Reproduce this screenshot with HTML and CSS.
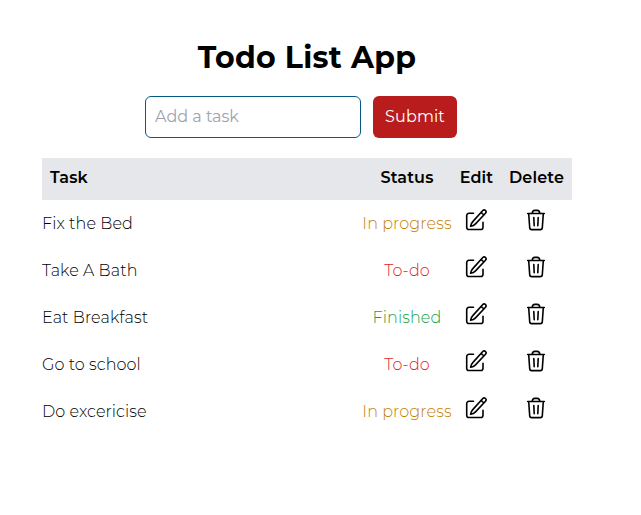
FILE: index.html
```html
<!DOCTYPE html>
<html lang="en">
<head>
<meta charset="utf-8">
<title>Todo List App</title>
<link rel="stylesheet" href="styles.css">
</head>
<body>
<svg class="sprite" aria-hidden="true">
  <symbol id="edit" viewBox="0 0 24 24"><path d="M9.500 5.300H5A2.300 2.300 0 0 0 2.700 7.600v11.600A2.300 2.300 0 0 0 5 21.500h11.700a2.300 2.300 0 0 0 2.300-2.300v-5M18.800 2.500a1.900 1.900 0 0 1 2.700 2.700L11.500 15.900c-1.200 1.300-2.800 2.100-4.900 2.400.3-2.100 1.100-3.700 2.400-4.900zM17.300 4a3.600 3.600 0 0 0 2.700 2.700"/></symbol>
  <symbol id="trash" viewBox="0 0 24 24"><path d="M3.700 5.500h16.600M8.200 5.300c.2-1.800 1-2.900 2.500-2.900h2.600c1.500 0 2.300 1.100 2.500 2.900M4.700 5.700l1 14A2 2 0 0 0 7.700 21.600h8.600a2 2 0 0 0 2-1.900l1-14M9.800 9.500l.4 8.200M14.200 9.500l-.4 8.200"/></symbol>
</svg>
<main class="app">
  <h1>Todo List App</h1>
  <form class="form">
    <input class="field" type="text" placeholder="Add a task">
    <button class="submit" type="button">Submit</button>
  </form>
  <table>
    <thead><tr><th class="task">Task</th><th class="state">Status</th><th class="edit">Edit</th><th class="delete">Delete</th></tr></thead>
    <tbody>
      <tr><td>Fix the Bed</td><td class="progress">In progress</td><td><svg><use href="#edit"/></svg></td><td><svg><use href="#trash"/></svg></td></tr>
      <tr><td>Take A Bath</td><td class="todo">To-do</td><td><svg><use href="#edit"/></svg></td><td><svg><use href="#trash"/></svg></td></tr>
      <tr><td>Eat Breakfast</td><td class="finished">Finished</td><td><svg><use href="#edit"/></svg></td><td><svg><use href="#trash"/></svg></td></tr>
      <tr><td>Go to school</td><td class="todo">To-do</td><td><svg><use href="#edit"/></svg></td><td><svg><use href="#trash"/></svg></td></tr>
      <tr><td>Do excericise</td><td class="progress">In progress</td><td><svg><use href="#edit"/></svg></td><td><svg><use href="#trash"/></svg></td></tr>
    </tbody>
  </table>
</main>
</body>
</html>
```
FILE: styles.css
```css
* { box-sizing: border-box; }
body { margin: 0; background: #fff; color: #000; font: 300 16px/24px Montserrat, Inter, sans-serif; }
.sprite { display: none; }
.app { width: 530px; margin-left: 42px; padding-top: 40px; }
h1 { margin: 0 0 20px; font-size: 30px; line-height: 36px; font-weight: 700; text-align: center; letter-spacing: .3px; }
.form { display: flex; gap: 12px; margin: 0 0 20px 103px; height: 42px; }
.field { width: 216px; padding: 8px 8px 8px 9px; border: 1px solid #075985; border-radius: 6px; font: inherit; font-weight: 400; background: #fff; }
.field::placeholder { color: #9ca3af; opacity: 1; }
.submit { width: 84px; padding: 0; border: 0; border-radius: 6px; background: #b91c1c; color: #fff; font: inherit; font-weight: 400; letter-spacing: .15px; }
table { width: 530px; border-collapse: collapse; table-layout: fixed; }
th { height: 42px; padding: 0 0 2px; background: #e5e7eb; font-weight: 600; letter-spacing: .15px; }
.task { text-align: left; padding-left: 8px; }
.state { width: 90px; }
.edit { width: 49px; }
.delete { width: 71px; }
td { height: 47px; padding: 0; text-align: center; white-space: nowrap; letter-spacing: .1px; }
td:first-child { text-align: left; }
td svg { display: block; position: relative; left: -.5px; width: 24px; height: 24px; margin: -7px auto 0; fill: none; stroke: #000; stroke-width: 1.6; stroke-linecap: round; stroke-linejoin: round; }
.progress { color: #c57f08; }
.todo { color: #dc2626; }
.finished { color: #16a34a; }
```
